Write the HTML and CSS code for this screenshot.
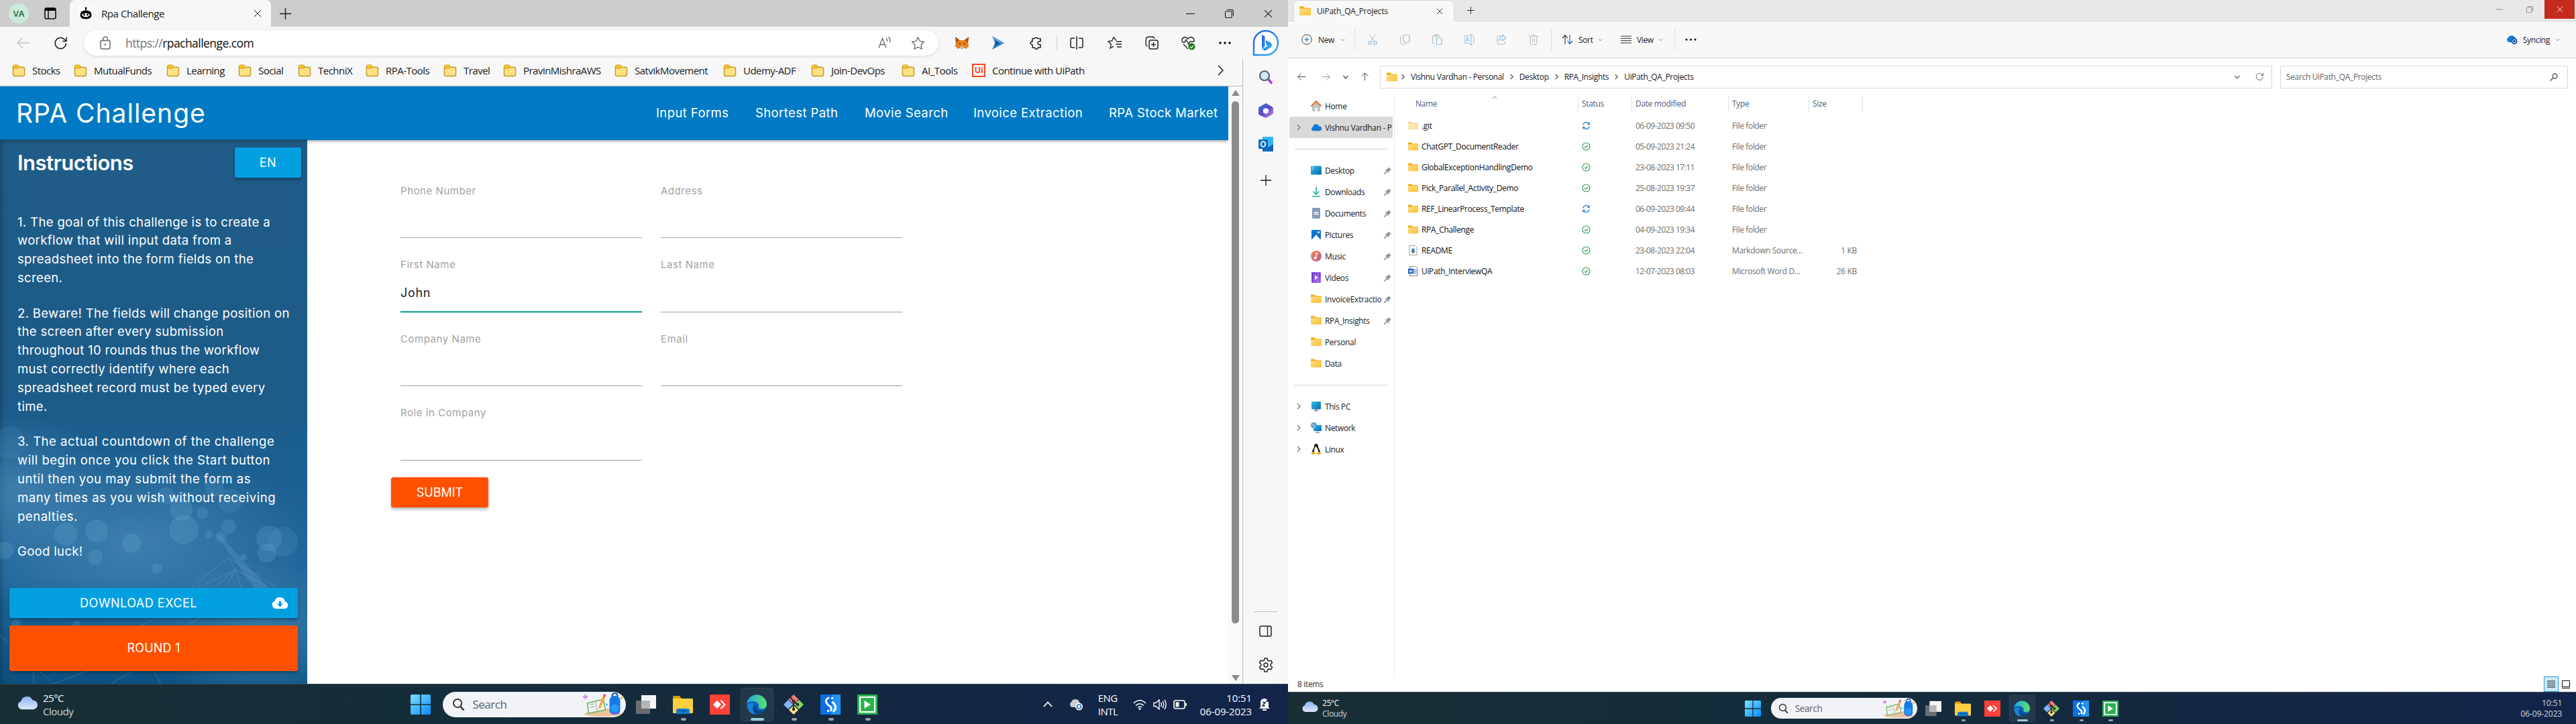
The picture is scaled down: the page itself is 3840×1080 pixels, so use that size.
FILE: index.html
```html
<!DOCTYPE html>
<html lang="en">
<head>
<meta charset="utf-8">
<title>Rpa Challenge</title>
<link rel="stylesheet" href="styles.css">
</head>
<body>
<svg class="defs" width="0" height="0">
  <defs>
    <linearGradient id="gFolder" x1="0" y1="0" x2="1" y2="1"><stop offset="0" stop-color="#ffe08a"/><stop offset="1" stop-color="#fbc02d"/></linearGradient>
    <linearGradient id="gWin" x1="0" y1="0" x2="1" y2="1"><stop offset="0" stop-color="#7be0ff"/><stop offset="1" stop-color="#0a8bff"/></linearGradient>
    <linearGradient id="gBlue" x1="0" y1="0" x2="1" y2="1"><stop offset="0" stop-color="#35c1e0"/><stop offset="1" stop-color="#0467b4"/></linearGradient>
    <linearGradient id="gBing" x1="0" y1="0" x2="1" y2="1"><stop offset="0" stop-color="#2b5be8"/><stop offset="1" stop-color="#2bb8ee"/></linearGradient>
    <linearGradient id="gCloud" x1="0" y1="0" x2="0" y2="1"><stop offset="0" stop-color="#8db4f4"/><stop offset="1" stop-color="#dbe6fb"/></linearGradient>
    <linearGradient id="gEdge" x1="0" y1="0" x2="1" y2="0"><stop offset="0" stop-color="#1fa5e6"/><stop offset="1" stop-color="#5be36d"/></linearGradient>
    <linearGradient id="gMusic" x1="0" y1="0" x2="1" y2="1"><stop offset="0" stop-color="#f08a4b"/><stop offset="1" stop-color="#b4559b"/></linearGradient>
    <linearGradient id="gVideo" x1="0" y1="0" x2="1" y2="1"><stop offset="0" stop-color="#7b3fd6"/><stop offset="1" stop-color="#b06bf2"/></linearGradient>
    <linearGradient id="gM365" x1="0" y1="0" x2="1" y2="1"><stop offset="0" stop-color="#2f7be0"/><stop offset=".5" stop-color="#5a4bc8"/><stop offset="1" stop-color="#d58be8"/></linearGradient>
  </defs>
  <symbol id="fav" viewBox="0 0 20 20"><path d="M1 4.500h15.500Q19 4.500 19 7v8.500Q19 18.500 16 18.500H4Q1 18.500 1 15.500z" fill="#ffe083" stroke="#c29b2e" stroke-width="1.500"/><path d="M1 6V3.500Q1 1 3.500 1h4Q10 1 10 3.500T7.500 6z" fill="#fbc51b" stroke="#c79a1c"/></symbol>
  <symbol id="fold" viewBox="0 0 16 16"><path d="M0 2.500q0-1 1-1h4.500l1.800 2H15q1 0 1 1V8H0z" fill="#f3aa13"/><path d="M0 5.500q0-1 1-1h14q1 0 1 1V13q0 1-1 1H1q-1 0-1-1z" fill="url(#gFolder)"/></symbol>
  <symbol id="x" viewBox="0 0 12 12"><path d="M1 1l10 10M11 1L1 11" stroke="currentColor" fill="none"/></symbol>
  <symbol id="plus" viewBox="0 0 16 16"><path d="M8 0v16M0 8h16" stroke="currentColor" fill="none" stroke-width="1.300"/></symbol>
  <symbol id="dash" viewBox="0 0 12 12"><path d="M0 6h12" stroke="currentColor"/></symbol>
  <symbol id="restore" viewBox="0 0 12 12"><rect x=".5" y="2.500" width="9" height="9" rx="1.500" fill="none" stroke="currentColor"/><path d="M3 .5h6q2.500 0 2.500 2.500v6" fill="none" stroke="currentColor"/></symbol>
  <symbol id="left" viewBox="0 0 16 16"><path d="M15 8H1M7 2L1 8l6 6" fill="none" stroke="currentColor" stroke-width="1.200"/></symbol>
  <symbol id="cr" viewBox="0 0 10 10"><path d="M3 1l4 4-4 4" fill="none" stroke="currentColor" stroke-width="1.300"/></symbol>
  <symbol id="cd" viewBox="0 0 10 10"><path d="M1.500 3L5 7l3.500-4" fill="none" stroke="currentColor" stroke-width="1.200"/></symbol>
  <symbol id="reload" viewBox="0 0 20 20"><path d="M17.500 10A7.700 7.700 0 1 1 15 4.300L17.800 7M18 1.500V7.200h-5.500" fill="none" stroke="currentColor" stroke-width="1.500"/></symbol>
  <symbol id="star" viewBox="0 0 20 20"><path d="M10 1.500l2.600 5.600 6 .8-4.400 4.200 1.100 6.100L10 15.300l-5.300 2.900 1.100-6.100L1.400 7.900l6-.8z" fill="none" stroke="currentColor" stroke-width="1.200" stroke-linejoin="round"/></symbol>
  <symbol id="pin" viewBox="0 0 12 12"><path d="M7.500 0L12 4.500l-1.500.3-2.200 2.300-.3 3L5.700 7.800 1.300 12 0 12l.2-1.300L4.300 6.400 1.900 4l3-.4L7.200 1.500z" fill="#8b959e"/></symbol>
  <symbol id="ok" viewBox="0 0 14 14"><circle cx="7" cy="7" r="5.900" fill="none" stroke="#2e9748" stroke-width="1.200"/><path d="M4.300 7.200l1.900 1.900L9.800 5.300" fill="none" stroke="#2e9748" stroke-width="1.300"/></symbol>
  <symbol id="sync" viewBox="0 0 14 14"><path d="M2 6A5 5 0 0 1 11.500 4.500M12 1.500v3.300H8.700M12 8a5 5 0 0 1-9.500 1.500M2 12.500V9.200h3.300" fill="none" stroke="#2382d6" stroke-width="1.400"/></symbol>
  <symbol id="mag" viewBox="0 0 20 20"><circle cx="8.500" cy="8.500" r="6.500" fill="none" stroke="currentColor" stroke-width="2"/><path d="M13 13.500l5.500 6" stroke="currentColor" stroke-width="2.500"/></symbol>
  <symbol id="cloud" viewBox="0 0 32 22"><path d="M7 21.500A6.500 6.500 0 0 1 6.500 9 9.500 9.500 0 0 1 24.500 7.500 7 7 0 0 1 25.500 21.500z"/></symbol>
  <symbol id="win" viewBox="0 0 30 30"><path d="M0 2q0-2 2-2h12.200v14.200H0zM15.800 0H28q2 0 2 2v12.200H15.800zM0 15.800h14.200V30H2q-2 0-2-2zM15.800 15.800H30V28q0 2-2 2H15.800z" fill="url(#gWin)"/></symbol>
  <symbol id="art" viewBox="0 0 60 36"><ellipse cx="30" cy="32" rx="28" ry="4" fill="#e9c59b"/><path d="M4 32l8-8h40l4 8z" fill="#e9c59b"/><path d="M7 16l12-3 12-3 3 16-25 5z" fill="#eef6ee" stroke="#6cae68" stroke-width="1.500"/><path d="M19 13l3 16M10 18l7-1M11 22l7-1" stroke="#9aa4b0"/><path d="M24 21L30 6l3.500 1.500L27.500 22 23.500 25z" fill="#fba63c"/><path d="M30 6l1.500-4 3.500 1.500L33.500 7.500z" fill="#f0606a"/><rect x="40" y="5" width="16" height="28" rx="7" fill="#147be6"/><path d="M44 6q0-5 4-5t4 5" stroke="#0b4fa5" stroke-width="2" fill="none"/><rect x="42" y="18" width="12" height="11" rx="4" fill="#2a97fa"/><path d="M42 31h12" stroke="#8d5cf0" stroke-width="2"/><path d="M4 3v7M.5 6.500h7" stroke="#d678f2" stroke-width="2"/><circle cx="36" cy="18" r="1.800" fill="#4bd2ee"/><circle cx="58" cy="8" r="1.800" fill="#f2a622"/></symbol>
  <symbol id="tview" viewBox="0 0 30 30"><rect x="0" y="9" width="21" height="20" fill="#6a6c70"/><rect x="8" y="1" width="22" height="20" fill="#f4f4f4"/><rect x="8" y="9" width="13" height="12" fill="#b4b5b7"/></symbol>
  <symbol id="expl" viewBox="0 0 30 30"><path d="M0 4q0-2 2-2h8l3 4h15q2 0 2 2v4H0z" fill="#dd9c07"/><rect x="0" y="6" width="30" height="22" rx="1.500" fill="#fecf3e"/><path d="M5 29v-5q0-3 3-3h14q3 0 3 3v5z" fill="#0f7dd2"/><path d="M9 24.500h12" stroke="#0a4f92" stroke-width="1.500"/></symbol>
  <symbol id="any" viewBox="0 0 30 30"><path fill="#fe4237" d="M0 0h30v30H0z"/><path d="M5 15l6-6 6 6-6 6z" fill="#fff"/><path d="M15.500 9.500l1.500-1.500 7 7-7 7-1.500-1.500 5.500-5.500z" fill="#fff"/></symbol>
  <symbol id="edge" viewBox="0 0 30 30"><circle cx="15" cy="15" r="15" fill="#0b62b5"/><path d="M.3 13A15 15 0 0 1 30 14q0 7-6.500 7.500-7 0-5.500-4 1-4-3.500-6Q7 8 .3 13z" fill="url(#gEdge)"/><path d="M11 13q-6 9 3 15.500Q6 31 2 22-2 12 11 13z" fill="#1684d8"/><path d="M14 15.500q-2 10 12.500 9-6 6.500-13 4.500-7-5 0-13.500z" fill="#0b4788"/></symbol>
  <symbol id="git" viewBox="0 0 30 30"><path d="M15 0l7.500 7.500L15 15 7.500 7.500z" fill="#f57878"/><path d="M7 8l7 7-7 7-7-7z" fill="#80b3ff"/><path d="M23 8l7 7-7 7-7-7z" fill="#86d860"/><path d="M15 16l7 7-7 7-7-7z" fill="#ffe27c"/><path d="M10 4l5 6v13M15 10l6 5" stroke="#252d33" stroke-width="2" fill="none"/><circle cx="15" cy="10" r="2.300" fill="#252d33"/><circle cx="21" cy="15" r="2.300" fill="#252d33"/><circle cx="15" cy="22" r="2.300" fill="#252d33"/></symbol>
  <symbol id="uis" viewBox="0 0 30 30"><path fill="#0a6fe6" d="M0 0h30v30H0z"/><path d="M18 0h12v30H16z" fill="#2293f0"/><path d="M13 4.500Q7.500 7 8.500 11t5 6 2 8M17 11q5.500 3.500 5.500 8t-4 6.500" fill="none" stroke="#fff" stroke-width="3"/><circle cx="17.500" cy="5.500" r="1.700" fill="#fff"/><circle cx="11.500" cy="24.500" r="1.700" fill="#fff"/></symbol>
  <symbol id="uia" viewBox="0 0 30 30"><path fill="#27b34d" d="M0 0h30v30H0z"/><rect x="4" y="4" width="22" height="22" fill="none" stroke="#fff" stroke-width="2.200"/><path d="M10.500 9v12l9.500-6z" fill="#fff"/></symbol>
</svg>

<div class="desktop">

<!-- left monitor: browser -->
<section class="monitor">
  <div class="tabstrip">
    <div class="avatar">VA</div>
    <svg class="wspace" viewBox="0 0 18 18"><rect x="1" y="1" width="16" height="16" rx="2.500" fill="none" stroke="#111" stroke-width="1.600"/><path d="M1 3.500Q1 1 3.500 1h11Q17 1 17 3.500V5H1z"/><path d="M6 5v12" stroke="#111" stroke-width="1.500"/></svg>
    <div class="tab">
      <svg width="20" height="20" viewBox="0 0 20 20"><rect width="20" height="20" fill="#fff"/><path d="M1.500 12Q1.500 5.500 10 5.500t8.500 6.500-8.500 6.500T1.500 12z"/><path d="M4 11.500q6-4 12 0-1 4-6 4t-6-4z" fill="#fff"/><circle cx="7.500" cy="12" r="1.400"/><circle cx="12.500" cy="12" r="1.400"/><path d="M10 6V2" stroke="#000" stroke-width="1.500"/><circle cx="10" cy="2" r="1.500"/></svg>
      <span>Rpa Challenge</span>
      <svg class="tabx" width="12" height="12"><use href="#x"/></svg>
    </div>
    <svg class="newtab" width="17" height="17"><use href="#plus"/></svg>
    <div class="winbtns"><svg width="13" height="13"><use href="#dash"/></svg><svg width="13" height="13"><use href="#restore"/></svg><svg width="13" height="13"><use href="#x"/></svg></div>
  </div>

  <div class="browser">
    <div class="main">
      <div class="toolbar">
        <svg class="back" width="20" height="20"><use href="#left"/></svg>
        <svg class="rel" width="21" height="21"><use href="#reload"/></svg>
        <div class="address">
          <svg width="16" height="20" viewBox="0 0 16 20"><rect x="1" y="6.500" width="14" height="12.500" rx="2" fill="none" stroke="#666" stroke-width="1.500"/><path d="M4.500 6.500V4.500a3.500 3.500 0 0 1 7 0v2" fill="none" stroke="#666" stroke-width="1.500"/><circle cx="8" cy="12.500" r="1.300" fill="#666"/></svg>
          <span class="url"><i>https://</i>rpachallenge.com</span>
          <svg class="aloud" width="20" height="20" viewBox="0 0 20 20"><path d="M1 17.500L6.500 3 12 17.500M3 12.500h7M12 3q2 2 1.500 5M15.500 1q3.500 4 2 8.500" fill="none" stroke="#666" stroke-width="1.300"/></svg>
          <svg class="st" width="21" height="21"><use href="#star"/></svg>
        </div>
        <div class="exts">
          <svg width="20" height="20" viewBox="0 0 20 20"><path d="M0 1l7 5h6l7-5-1 8 1 6-4 4-4-2H8l-4 2-4-4 1-6z" fill="#e8821e"/><path d="M0 1l6 5-5 4zM20 1l-6 5 5 4z" fill="#a9501a"/><path d="M7 15h6l-1 4H8z" fill="#c8bba9"/><path d="M5 10l3 1-1 1.500zM15 10l-3 1 1 1.500z" fill="#2a2018"/></svg>
          <svg width="18" height="20" viewBox="0 0 18 20"><path d="M0 0l18 10L0 20l4.500-10z" fill="#2a7cc8"/><path d="M0 0l18 10H4.500z" fill="#5ea4de"/><path d="M3 5l8 5-8 5 2-5z" fill="#17508c"/></svg>
          <svg width="19" height="20" viewBox="0 0 19 20"><path d="M4 3.500h3.500a2.200 2.200 0 0 1 4.200 0H16v4.300q-4-.5-4 2.400t4 2.300V17h-3.800a2.300 2.300 0 0 1-4.700 0H4v-4.500Q1 12 1 10.200T4 8z" fill="none" stroke="#222" stroke-width="1.500" stroke-linejoin="round"/></svg>
          <i class="vsep"></i>
          <svg width="20" height="20" viewBox="0 0 20 20"><path d="M7 3H3Q1 3 1 5v10q0 2 2 2h4M13 3h4q2 0 2 2v10q0 2-2 2h-4M10 0v20" fill="none" stroke="#222" stroke-width="1.500"/></svg>
          <svg width="21" height="20" viewBox="0 0 21 20"><path d="M13 6.500L9 1.500 6.800 6.700 1 7.700l4.200 4L4 18l5-2.800M13 8h8M12 12h9M14 16h7" fill="none" stroke="#222" stroke-width="1.400"/></svg>
          <svg width="20" height="20" viewBox="0 0 20 20"><rect x="6" y="6" width="13" height="13" rx="2.500" fill="none" stroke="#222" stroke-width="1.500"/><path d="M12.500 9v7M9 12.500h7M3.500 15Q1 14 1 12L1.500 4q.5-3 3-3H11q2.500 0 3 2.500" fill="none" stroke="#222" stroke-width="1.400"/></svg>
          <svg width="21" height="21" viewBox="0 0 21 21"><path d="M1 8Q0 3 5 1.500 8 1 10 4q2-3 5-2.500Q20 3 19 8M3 12l7 7M1 9h4l2-4 4 7 2-4h6" fill="none" stroke="#222" stroke-width="1.400"/><circle cx="15.500" cy="15.500" r="5" fill="#107c10"/><path d="M13 15.500l2 2 3-3.500" fill="none" stroke="#fff" stroke-width="1.200"/></svg>
          <svg width="18" height="4" viewBox="0 0 18 4"><circle cx="2" cy="2" r="1.700"/><circle cx="9" cy="2" r="1.700"/><circle cx="16" cy="2" r="1.700"/></svg>
        </div>
      </div>

      <div class="favbar">
        <span><svg><use href="#fav"/></svg>Stocks</span>
        <span><svg><use href="#fav"/></svg>MutualFunds</span>
        <span><svg><use href="#fav"/></svg>Learning</span>
        <span><svg><use href="#fav"/></svg>Social</span>
        <span><svg><use href="#fav"/></svg>TechniX</span>
        <span><svg><use href="#fav"/></svg>RPA-Tools</span>
        <span><svg><use href="#fav"/></svg>Travel</span>
        <span><svg><use href="#fav"/></svg>PravinMishraAWS</span>
        <span><svg><use href="#fav"/></svg>SatvikMovement</span>
        <span><svg><use href="#fav"/></svg>Udemy-ADF</span>
        <span><svg><use href="#fav"/></svg>Join-DevOps</span>
        <span><svg><use href="#fav"/></svg>AI_Tools</span>
        <span><b class="ui">Ui</b>Continue with UiPath</span>
        <svg class="more" viewBox="0 0 10 16"><path d="M1 1l7 7-7 7" fill="none" stroke="#222" stroke-width="1.500"/></svg>
      </div>

      <div class="view">
        <div class="page">
          <header class="nav">
            <h1>RPA Challenge</h1>
            <nav><a>Input Forms</a><a>Shortest Path</a><a>Movie Search</a><a>Invoice Extraction</a><a>RPA Stock Market</a></nav>
          </header>
          <div class="content">
            <aside class="instr">
              <svg class="bokeh" viewBox="0 0 458 812" preserveAspectRatio="none">
                <defs>
                  <radialGradient id="glow"><stop offset="0" stop-color="#5a98c4" stop-opacity=".5"/><stop offset="1" stop-color="#5a98c4" stop-opacity="0"/></radialGradient>
                </defs>
                <ellipse cx="200" cy="600" rx="260" ry="140" fill="url(#glow)"/>
                <ellipse cx="20" cy="520" rx="150" ry="110" fill="url(#glow)"/>
                <ellipse cx="390" cy="740" rx="180" ry="110" fill="url(#glow)"/>
                <g fill="#6fb0d6" fill-opacity=".22">
                  <circle cx="144" cy="584" r="17"/><circle cx="98" cy="589" r="17"/><circle cx="196" cy="602" r="14"/><circle cx="142" cy="623" r="11"/><circle cx="7" cy="613" r="13"/><circle cx="274" cy="582" r="22"/><circle cx="341" cy="578" r="11"/><circle cx="311" cy="589" r="6"/><circle cx="329" cy="593" r="8"/><circle cx="401" cy="595" r="19"/><circle cx="422" cy="600" r="22" fill-opacity=".14"/><circle cx="398" cy="617" r="14"/><circle cx="234" cy="640" r="8"/><circle cx="343" cy="539" r="18" fill-opacity=".16"/><circle cx="302" cy="557" r="9"/><circle cx="270" cy="552" r="17"/><circle cx="320" cy="519" r="14" fill-opacity=".18"/><circle cx="248" cy="532" r="13" fill-opacity=".18"/><circle cx="363" cy="623" r="5"/><circle cx="14" cy="452" r="24" fill-opacity=".1"/><circle cx="24" cy="722" r="7"/><circle cx="114" cy="724" r="6"/>
                </g>
                <path d="M322 590L380 670h20L330 592z" fill="#7cb6da" fill-opacity=".2"/>
                <g stroke="#8fc0e0" stroke-opacity=".3" fill="none"><path d="M340 624L285 668M340 624L351 642 296 668M351 642L320 668M351 642l50 26M340 624l72 44M351 642l-14 26M351 642l8 26"/><path d="M235 712l-55 30M300 712l-30 20M0 740l80 72M50 812v-40M165 812L225 778M240 812l-20-36M80 812l90-34"/></g>
              </svg>
              <div class="head"><h2>Instructions</h2><span class="btn en">EN</span></div>
              <p>1. The goal of this challenge is to create a<br>workflow that will input data from a<br>spreadsheet into the form fields on the<br>screen.</p>
              <p>2. Beware! The fields will change position on<br>the screen after every submission<br>throughout 10 rounds thus the workflow<br>must correctly identify where each<br>spreadsheet record must be typed every<br>time.</p>
              <p class="p3">3. The actual countdown of the challenge<br>will begin once you click the Start button<br>until then you may submit the form as<br>many times as you wish without receiving<br>penalties.</p>
              <p>Good luck!</p>
              <div class="btn dl"><span>DOWNLOAD EXCEL</span><svg width="25" height="17" viewBox="0 0 25 17"><path d="M6 17A6 6 0 0 1 4.500 5.500 8 8 0 0 1 20 6.500 5.400 5.400 0 0 1 20 17z" fill="#fff"/><path d="M12.500 14.500l-4.500-5h2.800V5.500h3.400v4H17z" fill="#039fe0"/></svg></div>
              <div class="btn round">ROUND 1</div>
            </aside>
            <form class="form">
              <div class="fields">
                <div class="f"><label>Phone Number</label></div><div class="f"><label>Address</label></div>
                <div class="f on"><label>First Name</label><span>John</span></div><div class="f"><label>Last Name</label></div>
                <div class="f"><label>Company Name</label></div><div class="f"><label>Email</label></div>
                <div class="f"><label>Role in Company</label></div>
              </div>
              <span class="btn submit">SUBMIT</span>
            </form>
          </div>
        </div>
        <div class="scroll"><i class="up"></i><i class="thumb"></i><i class="down"></i></div>
      </div>
    </div>

    <aside class="rail">
      <svg class="bing" width="40" height="42" viewBox="0 0 40 42"><path d="M2 38V19A18 18 0 1 1 20 38z" fill="#fff" stroke="url(#gBing)" stroke-width="2.500" stroke-linejoin="round"/><path d="M14 8l4.500 2v15.500L14 29zM19.500 16l6.500 3q4 2 2.500 6-.5 1.500-2.500 2.500l-7.500 4.500-4-2.500 8.500-5-2-1z" fill="url(#gBing)"/></svg>
      <svg width="22" height="22" viewBox="0 0 22 22"><path d="M14 13.500l6 7" stroke="#b23be0" stroke-width="3.500"/><circle cx="9" cy="9" r="7" fill="#cfe8f8" stroke="#5b6572" stroke-width="2.200"/></svg>
      <svg width="22" height="22" viewBox="0 0 22 22"><path d="M11 0l9 5q2 1 2 3v7q0 1-2 2l-9 5-9-4q-2-1-2-3V7q0-1 2-2zM11 7l-4 2v5l4 2 4-2V9z" fill="url(#gM365)" fill-rule="evenodd"/></svg>
      <svg width="22" height="22" viewBox="0 0 22 22"><path d="M6 0h16v22H6z" fill="#35b8f1"/><path d="M6 11l8 5 8-5v11H6z" fill="#1366b8"/><rect y="4" width="14" height="14" rx="1.500" fill="#0f6cbd"/><ellipse cx="7" cy="11" rx="3.200" ry="3.800" fill="none" stroke="#fff" stroke-width="1.800"/></svg>
      <svg class="thin" width="16" height="16"><use href="#plus"/></svg>
      <hr>
      <svg width="19" height="17" viewBox="0 0 19 17"><rect x="1" y="1" width="17" height="15" rx="2" fill="none" stroke="#222" stroke-width="1.500"/><path d="M12.500 1v15" stroke="#222" stroke-width="1.300"/></svg>
      <svg class="gear" width="22" height="22" viewBox="0 0 22 22"><path d="M9 1h4l.6 3 2 1.100 2.900-1 2 3.400L18.200 9.700v2.500l2.300 2.100-2 3.400-2.900-1-2 1.200L13 21H9l-.6-3.100-2-1.200-2.900 1-2-3.400 2.300-2.100V9.700L1.500 7.500l2-3.400 2.900 1 2-1.100z" fill="none" stroke="#222" stroke-width="1.500" stroke-linejoin="round"/><circle cx="11" cy="11" r="3" fill="none" stroke="#222" stroke-width="1.400"/></svg>
    </aside>
  </div>

  <footer class="taskbar">
    <div class="weather"><svg width="31" height="22" fill="url(#gCloud)"><use href="#cloud"/></svg><div>25°C<br><span>Cloudy</span></div></div>
    <div class="apps">
      <svg class="ic"><use href="#win"/></svg>
      <div class="pill"><svg width="19" height="19"><use href="#mag"/></svg><span>Search</span><svg class="art" width="61" height="36"><use href="#art"/></svg></div>
      <div class="app first"><svg class="ic"><use href="#tview"/></svg></div>
      <div class="app run"><svg class="ic"><use href="#expl"/></svg></div>
      <div class="app"><svg class="ic"><use href="#any"/></svg></div>
      <div class="app act"><svg class="ic"><use href="#edge"/></svg></div>
      <div class="app run"><svg class="ic"><use href="#git"/></svg></div>
      <div class="app run"><svg class="ic"><use href="#uis"/></svg></div>
      <div class="app run"><svg class="ic"><use href="#uia"/></svg></div>
    </div>
    <div class="tray">
      <svg width="14" height="9" viewBox="0 0 14 9"><path d="M1 8l6-6.500L13 8" fill="none" stroke="#fff" stroke-width="1.800"/></svg>
      <svg class="od" width="22" height="18" viewBox="0 0 22 18"><path d="M5 13A4.500 4.500 0 0 1 4 5 6.500 6.500 0 0 1 16 5q2 6-2 8z" fill="#c9ccd0"/><circle cx="15.500" cy="12" r="5.500" fill="#fff"/><circle cx="15.500" cy="12" r="3" fill="none" stroke="#1b74c8" stroke-width="1.600"/></svg>
      <div class="lang">ENG<br>INTL</div>
      <svg class="wifi" width="20" height="16" viewBox="0 0 20 16"><path d="M1 6q9-8.500 18 0M4 9.500q6-5.500 12 0M7 12.500q3-3 6 0" fill="none" stroke="#fff" stroke-width="1.600"/><circle cx="10" cy="14.500" r="1.500" fill="#fff"/></svg>
      <svg class="vol" width="20" height="16" viewBox="0 0 20 16"><path d="M1 5.500h3L9 1v14l-5-4.500H1zM11.500 5q2 3 0 6M14 3q3.500 5 0 10M17 1q4.500 7 0 14" fill="none" stroke="#fff" stroke-width="1.400"/></svg>
      <svg class="bat" width="21" height="14" viewBox="0 0 21 14"><rect x="1" y="1" width="16" height="12" rx="2.500" fill="none" stroke="#fff" stroke-width="1.600"/><path d="M3.500 3.500h5v7h-5z" fill="#fff"/><path d="M19 5v4" stroke="#fff" stroke-width="2"/></svg>
      <div class="clock">10:51<br>06-09-2023</div>
      <svg class="bell" width="17" height="20" viewBox="0 0 17 20"><path d="M2 14V7q0-6 6-6 6 1 6 6v7l2 2H0z" fill="#fff"/><path d="M5 18h6" stroke="#fff" stroke-width="2"/><path d="M5 7h4l-4 5h4M11 1h4l-4 4h4" fill="none" stroke="#12244a" stroke-width="1.400"/></svg>
    </div>
  </footer>
</section>

<!-- right monitor: file explorer -->
<section class="monitor ex">
  <div class="xtabs">
    <div class="xtab"><svg width="17" height="17"><use href="#fold"/></svg><span>UiPath_QA_Projects</span><svg width="10" height="10"><use href="#x"/></svg></div>
    <svg class="xnew" width="11" height="11"><use href="#plus"/></svg>
    <div class="xwin"><i><svg width="10" height="10"><use href="#dash"/></svg></i><i><svg width="10" height="10"><use href="#restore"/></svg></i><i class="close"><svg width="10" height="10"><use href="#x"/></svg></i></div>
  </div>

  <div class="cmd">
    <div class="new"><svg width="16" height="16" viewBox="0 0 16 16"><circle cx="8" cy="8" r="7.300" fill="none" stroke="#444"/><path d="M8 4.500v7M4.500 8h7" stroke="#0f6cbd" stroke-width="1.200"/></svg><span>New</span><svg class="dd"><use href="#cd"/></svg></div>
    <div class="tools">
      <svg viewBox="0 0 16 16"><path d="M3.500 0l6.500 11M12.500 0L6 11" stroke="#b5b5b5" fill="none"/><circle cx="4" cy="13" r="2.300" fill="none" stroke="#8fc3ea" stroke-width="1.200"/><circle cx="12" cy="13" r="2.300" fill="none" stroke="#8fc3ea" stroke-width="1.200"/></svg>
      <svg viewBox="0 0 16 16"><rect x="6" y="1" width="9" height="11" rx="2" fill="none" stroke="#8fc3ea" stroke-width="1.200"/><path d="M4 4Q1.500 4 1.500 6v6q0 3 3 3h4.500q1.500 0 2-1.500" fill="none" stroke="#b5b5b5"/></svg>
      <svg viewBox="0 0 16 16"><path d="M5 14H3q-1.500 0-1.500-1.500v-9Q1.500 2 3 2h8q1.500 0 1.500 1.500M4.500 .8h5v2.400h-5z" fill="none" stroke="#b5b5b5"/><rect x="7.500" y="5.500" width="7.500" height="10" rx="1" fill="none" stroke="#8fc3ea" stroke-width="1.200"/></svg>
      <svg viewBox="0 0 16 16"><path d="M9 2.500H3Q1 2.500 1 4.500v7q0 2 2 2h6M13 2.500q2 0 2 2v7q0 2-2 2" fill="none" stroke="#b5b5b5"/><path d="M3 11l2.500-6L8 11M4 9h3M11 .5v15M9 .5h4M9 15.500h4" fill="none" stroke="#8fc3ea" stroke-width="1.200"/></svg>
      <svg viewBox="0 0 16 16"><path d="M7 2.500H4q-2 0-2 2V13q0 2 2 2h7.500q2 0 2-2v-2" fill="none" stroke="#b5b5b5"/><path d="M9.500 1l5.500 4.500L9.500 10V7.500Q6 7.500 4.500 10 5 4 9.500 3.700z" fill="none" stroke="#8fc3ea" stroke-width="1.200"/></svg>
      <svg viewBox="0 0 16 16"><path d="M1 3h14M6 3Q6 .8 8 .8T10 3M2.500 3l1 11q.2 1.300 1.500 1.300h6q1.300 0 1.500-1.300l1-11M6.500 6v6M9.500 6v6" fill="none" stroke="#b5b5b5"/></svg>
    </div>
    <div class="sort"><svg width="17" height="16" viewBox="0 0 17 16"><path d="M5 15V2M1 6l4-4.500L9 6" fill="none" stroke="#444" stroke-width="1.200"/><path d="M12 1v13M8.500 10l3.500 4.500 4-4.500" fill="none" stroke="#0f6cbd" stroke-width="1.200"/></svg><span>Sort</span><svg class="dd"><use href="#cd"/></svg></div>
    <div class="vw"><svg width="16" height="12" viewBox="0 0 16 12"><path d="M0 1h16M0 4.300h16M0 7.600h16M0 11h16" stroke="#333"/></svg><span>View</span><svg class="dd"><use href="#cd"/></svg></div>
    <svg class="dots" width="17" height="4" viewBox="0 0 17 4"><circle cx="2" cy="2" r="1.500"/><circle cx="8.500" cy="2" r="1.500"/><circle cx="15" cy="2" r="1.500"/></svg>
    <div class="syncing"><svg width="17" height="14" viewBox="0 0 17 14"><path d="M4 11A4 4 0 0 1 3.500 3.500 5.500 5.500 0 0 1 13 4q3 1 1 7z" fill="#1380d8"/><circle cx="12" cy="9.500" r="4.500" fill="#0b4f9c"/><circle cx="12" cy="9.500" r="2.400" fill="none" stroke="#fff"/></svg><span>Syncing</span><svg class="dd"><use href="#cd"/></svg></div>
  </div>

  <div class="addr">
    <svg width="13" height="13"><use href="#left"/></svg>
    <svg class="fwd" width="13" height="13"><use href="#left"/></svg>
    <svg class="rec" width="10" height="10"><use href="#cd"/></svg>
    <svg class="upa" width="13" height="13"><use href="#left"/></svg>
    <div class="crumbs">
      <svg class="cf" width="16" height="16"><use href="#fold"/></svg>
      <svg class="s"><use href="#cr"/></svg><span>Vishnu Vardhan - Personal</span>
      <svg class="s"><use href="#cr"/></svg><span>Desktop</span>
      <svg class="s"><use href="#cr"/></svg><span>RPA_Insights</span>
      <svg class="s"><use href="#cr"/></svg><span>UiPath_QA_Projects</span>
      <svg class="dr" width="10" height="10"><use href="#cd"/></svg>
      <svg class="re" width="13" height="13"><use href="#reload"/></svg>
    </div>
    <div class="search"><span>Search UiPath_QA_Projects</span><svg width="12" height="12" viewBox="0 0 12 12"><circle cx="7.500" cy="4.500" r="3.500" fill="none" stroke="#555" stroke-width="1.300"/><path d="M5 7L.8 11.500" stroke="#555" stroke-width="1.500"/></svg></div>
  </div>

  <div class="body">
    <div class="tree">
      <div class="r"><i></i><svg viewBox="0 0 16 16"><path d="M2 7v9h4.500v-5h3v5H14V7L8 2z" fill="#bfc3c7"/><path d="M.5 8.500L8 1l7.500 7.500" fill="none" stroke="#e0702a" stroke-width="2"/></svg><span>Home</span></div>
      <div class="r sel"><i><svg><use href="#cr"/></svg></i><svg class="cl" fill="#1478d4"><use href="#cloud"/></svg><span>Vishnu Vardhan - P</span></div>
      <hr>
      <div class="r"><i></i><svg viewBox="0 0 16 16"><rect y="1.500" width="16" height="13" rx="1" fill="url(#gBlue)"/><path d="M2 4h1.500M2 6.500h1.500" stroke="#fff"/></svg><span>Desktop</span><svg class="pn"><use href="#pin"/></svg></div>
      <div class="r"><i></i><svg viewBox="0 0 16 16"><path d="M8 .5v11M3.500 7.500L8 12l4.500-4.500M2 15h12" fill="none" stroke="#22b297" stroke-width="1.600"/></svg><span>Downloads</span><svg class="pn"><use href="#pin"/></svg></div>
      <div class="r"><i></i><svg viewBox="0 0 16 16"><rect x="2" width="12" height="16" rx="1" fill="#859db9"/><path d="M4.500 7h7M4.500 9.500h7" stroke="#fff" stroke-width="1.300"/></svg><span>Documents</span><svg class="pn"><use href="#pin"/></svg></div>
      <div class="r"><i></i><svg viewBox="0 0 16 16"><rect x="1" y="1" width="14" height="14" rx="1" fill="#0f74cf"/><path d="M2 15l6-7 6 7z" fill="#fff"/><circle cx="11.500" cy="4.500" r="1.500" fill="#fff"/></svg><span>Pictures</span><svg class="pn"><use href="#pin"/></svg></div>
      <div class="r"><i></i><svg viewBox="0 0 16 16"><circle cx="8" cy="8" r="8" fill="url(#gMusic)"/><circle cx="6.500" cy="11" r="2" fill="#fff"/><path d="M8 11V3.500l3 1.500" fill="none" stroke="#fff" stroke-width="1.300"/></svg><span>Music</span><svg class="pn"><use href="#pin"/></svg></div>
      <div class="r"><i></i><svg viewBox="0 0 16 16"><rect x="1" width="14" height="16" rx="1" fill="url(#gVideo)"/><path d="M6 4.500v7L11 8z" fill="#fff"/><path d="M2.500 2v13M13.500 2v13" stroke="#41208a" stroke-dasharray="1.500 2"/></svg><span>Videos</span><svg class="pn"><use href="#pin"/></svg></div>
      <div class="r"><i></i><svg><use href="#fold"/></svg><span class="inv">InvoiceExtractio</span><svg class="pn"><use href="#pin"/></svg></div>
      <div class="r"><i></i><svg><use href="#fold"/></svg><span>RPA_Insights</span><svg class="pn"><use href="#pin"/></svg></div>
      <div class="r"><i></i><svg><use href="#fold"/></svg><span>Personal</span></div>
      <div class="r"><i></i><svg><use href="#fold"/></svg><span>Data</span></div>
      <hr>
      <div class="r"><i><svg><use href="#cr"/></svg></i><svg viewBox="0 0 16 16"><rect x="1" y="1" width="14" height="11.500" rx="1" fill="url(#gBlue)"/><path d="M8 12v2.500M5 14.500h6" stroke="#6c7a86" stroke-width="1.300"/></svg><span>This PC</span></div>
      <div class="r"><i><svg><use href="#cr"/></svg></i><svg viewBox="0 0 16 16"><rect x="4" y="4" width="12" height="9" rx="1" fill="url(#gBlue)"/><circle cx="4.500" cy="4.500" r="4.500" fill="#5d9fc4"/><path d="M2 2l3 3-1 3" stroke="#d5ecf8" fill="none"/><path d="M10 13v2M7 15.300h6" stroke="#6c7a86"/></svg><span>Network</span></div>
      <div class="r"><i><svg><use href="#cr"/></svg></i><svg viewBox="0 0 16 16"><path d="M8 0q3 0 3 4 0 2 2 5t0 6H3q-2-3 0-6t2-5q0-4 3-4z" fill="#1c1c1c"/><path d="M8 5q2 1 3 5t-3 5-3-5 3-5z" fill="#fff"/><ellipse cx="3.800" cy="14" rx="3" ry="2" fill="#f0ad1e"/><ellipse cx="12.200" cy="14" rx="3" ry="2" fill="#f0ad1e"/><path d="M6.500 4h3L8 5.500z" fill="#f0ad1e"/></svg><span>Linux</span></div>
    </div>
    <div class="list">
      <div class="row th"><span class="nm">Name<svg viewBox="0 0 10 6"><path d="M1 5l4-4 4 4" fill="none" stroke="#666"/></svg></span><span>Status</span><span>Date modified</span><span>Type</span><span class="sz">Size</span></div>
      <div class="row"><span class="n git"><svg><use href="#fold"/></svg>.git</span><svg class="sx"><use href="#sync"/></svg><span>06-09-2023 09:50</span><span>File folder</span><span></span></div>
      <div class="row"><span class="n"><svg><use href="#fold"/></svg>ChatGPT_DocumentReader</span><svg class="sx"><use href="#ok"/></svg><span>05-09-2023 21:24</span><span>File folder</span><span></span></div>
      <div class="row"><span class="n"><svg><use href="#fold"/></svg>GlobalExceptionHandlingDemo</span><svg class="sx"><use href="#ok"/></svg><span>23-08-2023 17:11</span><span>File folder</span><span></span></div>
      <div class="row"><span class="n"><svg><use href="#fold"/></svg>Pick_Parallel_Activity_Demo</span><svg class="sx"><use href="#ok"/></svg><span>25-08-2023 19:37</span><span>File folder</span><span></span></div>
      <div class="row"><span class="n"><svg><use href="#fold"/></svg>REF_LinearProcess_Template</span><svg class="sx"><use href="#sync"/></svg><span>06-09-2023 09:44</span><span>File folder</span><span></span></div>
      <div class="row"><span class="n"><svg><use href="#fold"/></svg>RPA_Challenge</span><svg class="sx"><use href="#ok"/></svg><span>04-09-2023 19:34</span><span>File folder</span><span></span></div>
      <div class="row"><span class="n"><svg viewBox="0 0 16 16"><path d="M2 .5h9L14 3.500v12H2z" fill="#fff" stroke="#9a9a9a"/><path d="M6 5h4v4h2l-4 4-4-4h2z" fill="#3d7ea6"/></svg>README</span><svg class="sx"><use href="#ok"/></svg><span>23-08-2023 22:04</span><span>Markdown Source...</span><span class="kb">1 KB</span></div>
      <div class="row"><span class="n"><svg viewBox="0 0 16 16"><path d="M3 .5h9L15 3.500v12H3z" fill="#fff" stroke="#777"/><path d="M9 6h5M9 8.500h5M9 11h5" stroke="#3a78d0"/><rect y="4" width="9" height="8" fill="#1b5ebe"/><path d="M2 6l1 4 1.500-3.500L6 10l1-4" fill="none" stroke="#fff"/></svg>UiPath_InterviewQA</span><svg class="sx"><use href="#ok"/></svg><span>12-07-2023 08:03</span><span>Microsoft Word D...</span><span class="kb">26 KB</span></div>
    </div>
  </div>

  <div class="status"><span>8 items</span><i class="v1"><svg width="12" height="11" viewBox="0 0 12 11"><path d="M0 1h12M0 4h12M0 7h12M0 10h12" stroke="#111"/></svg></i><i class="v2"><svg width="12" height="12" viewBox="0 0 12 12"><rect x=".5" y=".5" width="11" height="9" fill="#fff" stroke="#111"/><path d="M0 11.500h12" stroke="#111"/></svg></i></div>

  <footer class="taskbar small">
    <div class="weather"><svg width="31" height="22" fill="url(#gCloud)"><use href="#cloud"/></svg><div>25°C<br><span>Cloudy</span></div></div>
    <div class="apps">
      <svg class="ic"><use href="#win"/></svg>
      <div class="pill"><svg width="19" height="19"><use href="#mag"/></svg><span>Search</span><svg class="art" width="61" height="36"><use href="#art"/></svg></div>
      <div class="app first"><svg class="ic"><use href="#tview"/></svg></div>
      <div class="app run"><svg class="ic"><use href="#expl"/></svg></div>
      <div class="app"><svg class="ic"><use href="#any"/></svg></div>
      <div class="app act"><svg class="ic"><use href="#edge"/></svg></div>
      <div class="app run"><svg class="ic"><use href="#git"/></svg></div>
      <div class="app run"><svg class="ic"><use href="#uis"/></svg></div>
      <div class="app run"><svg class="ic"><use href="#uia"/></svg></div>
    </div>
    <div class="tray"><div class="clock">10:51<br>06-09-2023</div></div>
  </footer>
</section>
</div>
</body>
</html>
```
FILE: styles.css
```css
* { box-sizing: border-box; }
body { margin: 0; background: #fff; overflow: hidden; }
h1, h2, p { margin: 0; font-weight: 400; }
i { font-style: normal; }
svg { display: block; flex: none; }
.defs { position: absolute; }

.desktop { display: grid; grid-template-columns: 1920px 1920px; width: 3840px; height: 1080px; }
.monitor {
  display: flex; flex-direction: column; height: 1080px; min-width: 0; overflow: hidden;
  font: 15px "Open Sans", "Noto Sans", sans-serif; letter-spacing: -.5px; color: #1b1b1b; white-space: nowrap;
}

/* browser tab strip */
.tabstrip { display: flex; align-items: center; height: 40px; background: #cdcdcd; padding-left: 13px; flex: none; }
.avatar { width: 30px; height: 30px; border-radius: 50%; background: #cbead9; color: #1f5c41; font-size: 13px; font-weight: 600; text-align: center; line-height: 30px; letter-spacing: 0; }
.wspace { width: 18px; height: 18px; margin-left: 23px; }
.tab { display: flex; align-items: center; width: 300px; height: 40px; margin-left: 20px; padding: 0 14px 0 14px; background: #f7f7f7; border-radius: 8px 8px 0 0; letter-spacing: -.42px; }
.tab span { margin-left: 13px; flex: 1; }
.newtab { margin-left: 13px; }
.winbtns { display: flex; gap: 45px; margin-left: auto; padding-right: 23px; }

.browser { display: grid; grid-template-columns: 1853px 67px; flex: 1; min-height: 0; background: #f7f7f7; }
.main { display: flex; flex-direction: column; min-width: 0; min-height: 0; }

.toolbar { display: flex; align-items: center; height: 48px; flex: none; }
.back { margin-left: 25px; color: #c3c3c3; }
.rel { margin-left: 35px; color: #222; }
.address { display: flex; align-items: center; width: 1276px; height: 38px; margin-left: 24px; padding: 0 20px 0 24px; background: #fff; border-radius: 19px; box-shadow: 0 1px 4px #0002; }
.url { margin-left: 22px; font-size: 17.5px; letter-spacing: -.56px; color: #111; flex: 1; }
.url i { color: #767676; }
.aloud { margin-right: 29px; }
.st { color: #666; }
.exts { display: grid; grid-template-columns: 54px 54px 58px 4px 56px 56px 55px 55px 54px; margin-left: 8px; align-items: center; justify-items: center; }
.vsep { width: 1px; height: 20px; background: #ccc; }

.favbar { display: grid; grid-template-columns: 92px 138px 107px 89px 101px 116px 89px 166px 162px 131px 135px 105px 366px auto; align-items: center; height: 41px; flex: none; padding: 0 0 6px 18px; border-right: 1px solid #bcbcbc; border-bottom: 1px solid #b9b9b9; letter-spacing: -.52px; }
.favbar span { display: flex; align-items: center; gap: 10px; }
.favbar span svg { width: 20px; height: 19px; }
.ui { width: 20px; height: 20px; border: 2px solid #fa4616; color: #fa4616; font: 700 13px/15px "Open Sans", sans-serif; text-align: center; background: #fff; }
.more { width: 10px; height: 16px; }

/* page */
.view { display: flex; flex: 1; min-height: 0; }
.page { width: 1831px; display: flex; flex-direction: column; background: #fff; font-family: Inter, "Open Sans", sans-serif; min-height: 0; }
.nav { display: flex; justify-content: space-between; align-items: center; height: 80px; flex: none; background: #007ac4; color: #fff; box-shadow: 0 2px 4px #0005; padding: 0 0 2px 24px; }
.nav h1 { font-size: 39px; letter-spacing: 1px; }
.nav nav { display: grid; grid-template-columns: 148px 163px 162px 202px 178px; font-size: 18.500px; letter-spacing: .4px; }
.content { display: flex; flex: 1; min-height: 0; }
.instr { position: relative; width: 458px; margin-top: -1px; padding: 12px 14px 0; color: #fff; background: linear-gradient(#1f5c87, #1d5b88 45%, #1b5f91 60%, #23689b 80%, #0b5080); box-shadow: inset 5px 5px 8px -3px #0004; }
.bokeh { position: absolute; inset: 0; width: 458px; height: 812px; }
.instr > :not(.bokeh) { position: relative; }
.head { display: flex; justify-content: space-between; height: 45px; margin-right: -5px; margin-bottom: 52.500px; }
.head h2 { margin-left: 12px; font-size: 31px; font-weight: 600; line-height: 46px; letter-spacing: -.5px; }
.instr p { margin: 0 0 25px 12px; font-size: 18.500px; line-height: 27.800px; letter-spacing: .35px; }
.instr .p3 { letter-spacing: .53px; }
.btn { display: flex; align-items: center; justify-content: center; height: 45px; border-radius: 3px; background: #03a0e1; color: #fff; font-size: 18px; letter-spacing: .5px; box-shadow: 0 3px 4px #0004; font-family: Inter, sans-serif; }
.en { width: 99px; }
.dl { margin-top: 39.500px; padding-left: 105px; justify-content: flex-start; }
.dl svg { margin-left: auto; margin-right: 14px; }
.round { height: 68px; margin-top: 11px; background: #ff5000; letter-spacing: .2px; }

.form { padding: 36px 0 0 139px; }
.fields { display: grid; grid-template-columns: 360px 360px; column-gap: 28px; grid-auto-rows: 110.400px; }
.f { display: flex; flex-direction: column; gap: 20px; padding-top: 30px; border-bottom: 1px solid #9e9e9e; }
.f.on { border-bottom: 2px solid #26a69a; box-shadow: 0 1px 0 #26a69a66; }
.f label { font-size: 15px; line-height: 20px; letter-spacing: .55px; color: #a2a2a2; }
.f span { font-size: 18px; line-height: 24px; letter-spacing: .7px; color: #222; }
.submit { width: 145px; height: 45px; margin: 25px 0 0 -14px; background: #ff5000; letter-spacing: 0; }

.scroll { display: flex; flex-direction: column; align-items: center; width: 22px; background: #fafafa; border-right: 1px solid #bcbcbc; }
.up, .down { border: 6px solid transparent; width: 0; height: 0; }
.up { border-bottom: 9px solid #8c8c8c; border-top: 0; margin-top: 5px; }
.thumb { width: 11px; height: 779px; margin-top: 8px; border-radius: 6px; background: #8b8b8b; }
.down { border-top: 9px solid #8c8c8c; border-bottom: 0; margin-top: auto; margin-bottom: 4px; }

.rail { display: flex; flex-direction: column; align-items: center; padding-top: 4px; min-height: 0; }
.rail > svg:nth-child(2) { margin-top: 18px; }
.rail > svg:nth-child(3), .rail > svg:nth-child(4) { margin-top: 28px; }
.rail .thin { margin-top: 35px; }
.rail hr { width: 35px; height: 1px; border: 0; background: #bbb; margin: auto 0 20px; }
.rail .gear { margin: 31px 0 17px; }

/* taskbar */
.taskbar { display: grid; grid-template-columns: 1fr auto 1fr; align-items: center; height: 60px; flex: none; border-top: 1px solid #3c4a52; background: linear-gradient(90deg, #192e35, #142d3a 35%, #14293f 65%, #12244a); color: #fff; }
.small { zoom: .8; }
.small .clock { color: #d0d6e0; }
.weather { display: flex; align-items: center; gap: 8px; padding-left: 25px; line-height: 20px; }
.weather svg { margin-bottom: 6px; }
.weather span { color: #ccd3d6; }
.apps { display: flex; align-items: center; height: 59px; padding-left: 12px; }
.ic { width: 30px; height: 30px; }
.pill { display: flex; align-items: center; width: 273px; height: 38px; margin: 0 3px 0 18px; padding: 0 4px 0 14px; border-radius: 19px; background: #f1f3f6; color: #333; }
.pill span { margin-left: 12px; font-size: 17px; color: #5b5f64; flex: 1; }
.app { position: relative; display: flex; align-items: center; justify-content: center; width: 49px; height: 50px; margin: 0 3px; border-radius: 5px; }
.app.act { background: #233848; box-shadow: inset 0 0 0 1px #32454f; }
.run::after, .act::after { content: ""; position: absolute; bottom: 1px; left: 21px; width: 8px; height: 4px; border-radius: 2px; background: #9aa3a8; }
.act::after { left: 15px; width: 20px; background: #98cbdc; }
.tray { display: flex; align-items: center; justify-content: flex-end; padding-right: 26px; line-height: 20px; }
.od { margin-left: 24px; }
.lang { width: 30px; margin: 0 22px; }
.vol { margin-left: 10px; }
.bat { margin-left: 10px; }
.clock { margin-left: 19px; text-align: right; letter-spacing: -.1px; }
.bell { margin-left: 11px; }

/* file explorer */
.ex { font-size: 12px; letter-spacing: -.35px; background: #fff; }
.ex .taskbar { font-size: 15px; letter-spacing: -.5px; }
.xtabs { display: flex; height: 32px; flex: none; align-items: center; background: #e8e8e8; border-bottom: 1px solid #d8d8d8; padding-left: 8px; }
.xtab { display: flex; align-items: center; width: 240px; height: 32px; margin-bottom: -1px; padding: 0 16px 0 8px; background: #f8f8f8; border: 1px solid #d8d8d8; border-bottom: 0; border-radius: 7px 7px 0 0; letter-spacing: -.2px; }
.xtab span { margin-left: 9px; flex: 1; }
.xnew { margin-left: 19px; }
.xwin { display: flex; margin: 0 2px 4px auto; color: #777; }
.xwin i { display: flex; align-items: center; justify-content: center; width: 45px; height: 28px; }
.xwin .close { background: #c42b1c; color: #fff; }

.cmd { display: flex; align-items: center; height: 55px; flex: none; background: #f8f8f8; border-bottom: 1px solid #d5d5d5; padding-right: 24px; }
.cmd > div { display: flex; align-items: center; height: 32px; }
.dd { width: 7px; height: 7px; color: #777; }
.new { width: 100px; padding-left: 20px; border-right: 1px solid #ddd; }
.new span { margin: 0 9px 0 9px; }
.tools { width: 293px; padding-left: 2px; border-right: 1px solid #ddd; }
.tools svg { width: 16px; height: 16px; margin: 0 16px; }
.sort { padding-left: 15px; width: 103px; }
.sort span { margin: 0 7px 0 8px; }
.vw { width: 81px; border-right: 1px solid #ddd; }
.vw span { margin: 0 7px 0 8px; }
.dots { margin-left: 15px; }
.syncing { margin-left: auto; gap: 8px; }

.addr { display: flex; align-items: center; height: 55px; flex: none; padding-left: 14px; color: #444; }
.fwd { transform: scaleX(-1); margin-left: 23px; color: #999; }
.rec { margin-left: 18px; }
.upa { transform: rotate(90deg); margin-left: 17px; }
.crumbs { display: flex; align-items: center; width: 1330px; height: 34px; margin-left: 16px; padding: 0 11px 0 9px; border: 1px solid #d9d9d9; color: #1b1b1b; }
.s { width: 9px; height: 9px; margin: 0 7px; color: #444; }
.cf + .s { margin-left: 4px; margin-right: 7px; }
.dr { margin-left: auto; margin-right: 22px; color: #666; }
.re { color: #666; }
.search { display: flex; align-items: center; justify-content: space-between; width: 429px; height: 34px; margin-left: 12px; padding: 0 14px 0 8px; border: 1px solid #d9d9d9; color: #666; }

.body { display: flex; flex: 1; min-height: 0; }
.tree { width: 159px; border-right: 1px solid #ececec; }
.r { display: flex; align-items: center; height: 32px; margin: 0 2px; }
.r > i { width: 32px; padding-left: 9px; display: flex; }
.r i svg { width: 10px; height: 10px; color: #777; }
.r > svg { width: 16px; height: 16px; }
.r > span { margin-left: 5px; overflow: hidden; flex: 1; }
.r > svg.pn { width: 11px; height: 11px; margin-right: 2px; }
.inv { letter-spacing: -.25px; }
.sel { background: #d9d9d9; border-radius: 2px; }
.tree hr { height: 1px; margin: 16px 10px 15px; border: 0; background: #cfcfcf; }

.list { padding-left: 20px; flex: 1; }
.row { display: grid; grid-template-columns: 259px 80px 144px 120px 66px; height: 31px; align-items: center; color: #6d6d6d; }
.row span:nth-child(3) { letter-spacing: -.52px; }
.th { height: 25px; margin-bottom: 5px; color: #4c607a; }
.th span { height: 25px; line-height: 25px; border-left: 1px solid #e2e2e2; margin-left: -6px; padding-left: 5px; }
.row.th span:nth-child(3) { letter-spacing: -.33px; }
.th .nm { position: relative; border: 0; margin-left: 0; padding-left: 11px; }
.th .nm svg { position: absolute; left: 125px; top: 1px; width: 8px; height: 5px; }
.th .sz { width: 81px; border-right: 1px solid #e2e2e2; }
.n { display: flex; align-items: center; gap: 5px; color: #111; letter-spacing: -.33px; }
.n svg { width: 15px; height: 15px; }
.git svg { opacity: .5; }
.sx { width: 13px; height: 13px; }
.kb { text-align: right; }

.status { display: flex; align-items: center; height: 23px; flex: none; padding: 0 4px 0 14px; color: #333; }
.status span { flex: 1; }
.status i { display: flex; align-items: center; justify-content: center; width: 22px; height: 23px; }
.v1 { background: #cce8f6; border: 1px solid #2a9bd6; }
```
